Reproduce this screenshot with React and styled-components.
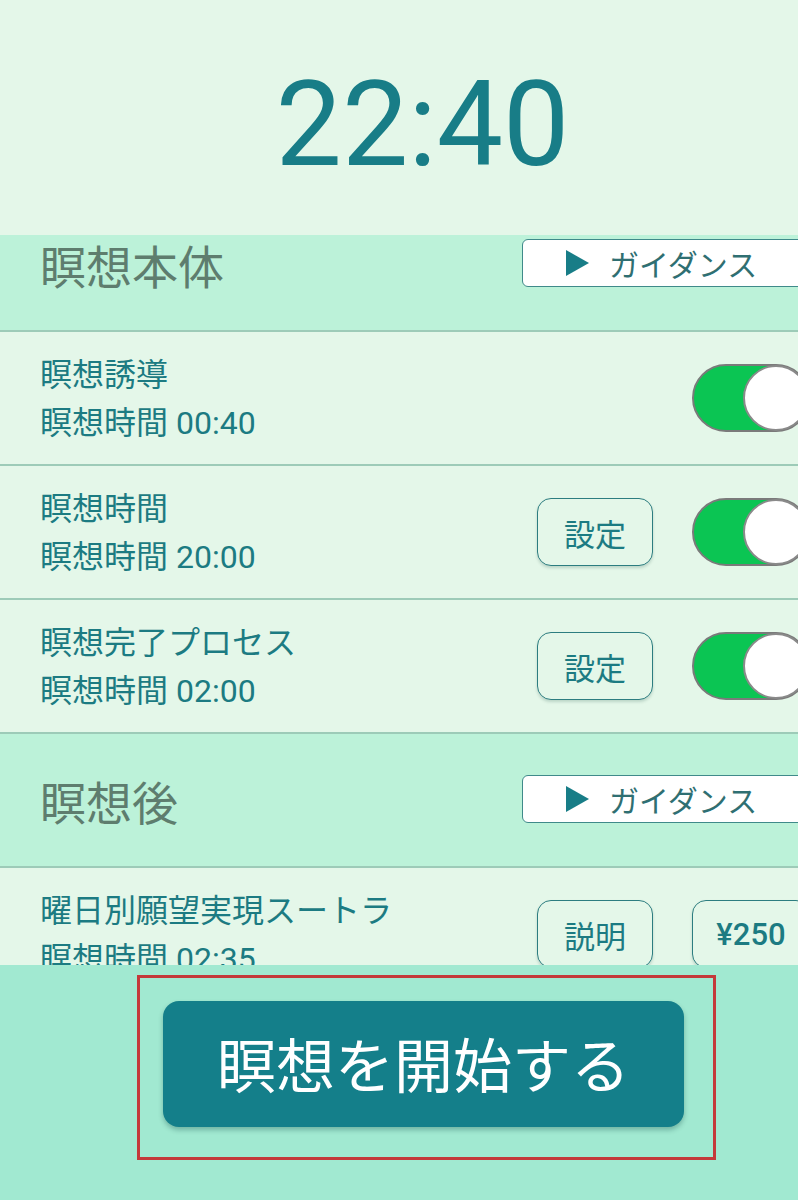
import React from "react";
import styled, { createGlobalStyle } from "styled-components";

const GlobalStyle = createGlobalStyle`
  html, body {
    margin: 0;
    padding: 0;
    overflow: hidden;
    background: #e4f7e9;
  }
  body {
    font-family: Roboto, "Noto Sans CJK JP", sans-serif;
  }
`;

const sections = [
  {
    title: "瞑想本体",
    items: [
      { name: "瞑想誘導", time: "00:40", setting: false, toggle: true },
      { name: "瞑想時間", time: "20:00", setting: true, toggle: true },
      { name: "瞑想完了プロセス", time: "02:00", setting: true, toggle: true },
    ],
  },
  {
    title: "瞑想後",
    items: [
      { name: "曜日別願望実現スートラ", time: "02:35", info: true, price: "¥250" },
    ],
  },
];

const Page = styled.div`
  width: 845px;
  height: 1200px;
  display: flex;
  flex-direction: column;
  background: #e4f7e9;
`;

const ClockArea = styled.div`
  height: 235px;
  flex-shrink: 0;
  display: flex;
  align-items: center;
  justify-content: center;
`;

const Clock = styled.div`
  font-family: Roboto, sans-serif;
  font-size: 118px;
  line-height: 1;
  color: #187d87;
  padding-top: 14px;
`;

const ScrollArea = styled.div`
  flex: 1;
  overflow: hidden;
`;

const List = styled.div`
  margin-top: -37px;
`;

const SectionHeader = styled.div`
  height: 132px;
  background: #bcf2d9;
  border-bottom: 2px solid #9dcbb8;
  display: flex;
  align-items: center;
  justify-content: space-between;
  padding: 0 35px 0 40px;
`;

const SectionTitle = styled.h2`
  margin: 0;
  font-family: "Noto Sans CJK JP", sans-serif;
  font-weight: 400;
  font-size: 46px;
  color: #5e7d6e;
`;

const GuideButton = styled.button`
  width: 288px;
  height: 48px;
  box-sizing: border-box;
  background: #ffffff;
  border: 1.5px solid #3f8a8a;
  border-radius: 6px;
  display: flex;
  align-items: center;
  padding: 0 0 0 43px;
  gap: 20px;
  font-family: "Noto Sans CJK JP", sans-serif;
  font-size: 30px;
  color: #2f6f72;
  margin-top: -3px;
`;

const Triangle = styled.span`
  width: 0;
  height: 0;
  border-top: 13px solid transparent;
  border-bottom: 13px solid transparent;
  border-left: 23px solid #187d87;
`;

const Row = styled.div`
  height: 134px;
  box-sizing: border-box;
  border-bottom: 2px solid #9dcbb8;
  background: #e4f7e9;
  display: flex;
  align-items: center;
  justify-content: space-between;
  padding: 0 35px 0 40px;
`;

const RowText = styled.div`
  align-self: flex-start;
  padding-top: 19px;
  color: #1c7b82;
  font-size: 32px;
  line-height: 48px;
`;

const Line = styled.div`
  white-space: nowrap;
`;

const Controls = styled.div`
  display: flex;
  align-items: center;
  gap: 39px;
`;

const SmallButton = styled.button`
  width: ${(p) => p.$width || 116}px;
  height: 68px;
  box-sizing: border-box;
  background: #e4f7e9;
  border: 1.5px solid #2c7d80;
  border-radius: 14px;
  box-shadow: 0 2px 3px rgba(0, 60, 50, 0.18);
  font-family: Roboto, "Noto Sans CJK JP", sans-serif;
  font-size: 31px;
  font-weight: ${(p) => (p.$bold ? 500 : 400)};
  color: #1c7b82;
  padding: 0;
`;

const Toggle = styled.div`
  width: 118px;
  height: 68px;
  box-sizing: border-box;
  border-radius: 34px;
  border: 2px solid #7a7a7a;
  background: #0bc553;
  display: flex;
  justify-content: flex-end;
  align-items: center;
`;

const Knob = styled.div`
  width: 66px;
  height: 66px;
  box-sizing: border-box;
  border-radius: 50%;
  background: #ffffff;
  border: 2px solid #8a8a8a;
  margin-right: -1px;
`;

const Footer = styled.div`
  height: 235px;
  flex-shrink: 0;
  background: #a1e9d1;
  display: flex;
  justify-content: center;
  align-items: flex-start;
  padding: 10px 0 0 8px;
  box-sizing: border-box;
`;

const Highlight = styled.div`
  width: 579px;
  height: 185px;
  box-sizing: border-box;
  border: 3px solid #c4393a;
  padding: 23px 0 0 23px;
`;

const StartButton = styled.button`
  width: 521px;
  height: 126px;
  border: none;
  border-radius: 16px;
  background: #147f8a;
  box-shadow: 0 3px 5px rgba(0, 60, 60, 0.3);
  color: #ffffff;
  font-family: "Noto Sans CJK JP", sans-serif;
  font-size: 59px;
  padding: 0 0 4px;
`;

const App = () => {
  return (
    <Page>
      <GlobalStyle />
      <ClockArea>
        <Clock>22:40</Clock>
      </ClockArea>
      <ScrollArea>
        <List>
          {sections.map((section) => (
            <div key={section.title}>
              <SectionHeader>
                <SectionTitle>{section.title}</SectionTitle>
                <GuideButton>
                  <Triangle />
                  ガイダンス
                </GuideButton>
              </SectionHeader>
              {section.items.map((item) => (
                <Row key={item.name}>
                  <RowText>
                    <Line>{item.name}</Line>
                    <Line>瞑想時間 {item.time}</Line>
                  </RowText>
                  <Controls>
                    {item.setting && <SmallButton>設定</SmallButton>}
                    {item.info && <SmallButton>説明</SmallButton>}
                    {item.price && (
                      <SmallButton $width={118} $bold>
                        {item.price}
                      </SmallButton>
                    )}
                    {item.toggle && (
                      <Toggle>
                        <Knob />
                      </Toggle>
                    )}
                  </Controls>
                </Row>
              ))}
            </div>
          ))}
        </List>
      </ScrollArea>
      <Footer>
        <Highlight>
          <StartButton>瞑想を開始する</StartButton>
        </Highlight>
      </Footer>
    </Page>
  );
};

export default App;
